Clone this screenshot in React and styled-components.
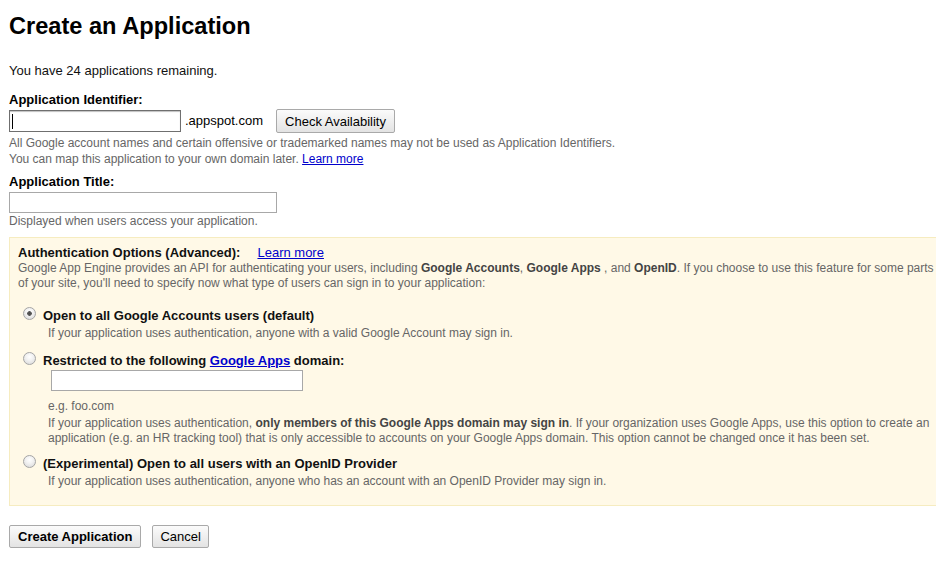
import styled, { createGlobalStyle } from "styled-components";

const Global = createGlobalStyle`
    html, body {
        margin: 0;
        padding: 0;
        background: #fff;
        overflow-x: hidden;
    }
    body {
        font-family: "Liberation Sans", Arial, sans-serif;
        font-size: 13px;
        color: #000;
    }
`;

const Page = styled.div`
    padding: 0 9px 40px;
`;

const Title = styled.h1`
    margin: 12px 0 0;
    font-size: 23.6px;
    line-height: 28px;
    font-weight: bold;
`;

const Remaining = styled.p`
    margin: 23px 0 0;
    line-height: 16px;
    color: #111;
`;

const Label = styled.div`
    margin-top: ${p => p.$top}px;
    font-weight: bold;
    line-height: 16px;
`;

const FieldRow = styled.div`
    display: flex;
    align-items: center;
    margin-top: 1px;
    height: 24px;
`;

const CaretWrap = styled.span`
    position: relative;
    display: inline-block;
`;

const Caret = styled.span`
    position: absolute;
    left: 3px;
    top: 4px;
    width: 1px;
    height: 15px;
    background: #000;
`;

const TextInput = styled.input`
    display: block;
    box-sizing: border-box;
    width: ${p => p.$w}px;
    height: ${p => p.$h || 21}px;
    margin: ${p => p.$margin || 0};
    padding: 1px 3px;
    border: 1px solid ${p => (p.$focus ? "#6f6f6f" : "#a8a8a8")};
    box-shadow: ${p => (p.$focus ? "inset 0 1px 1px rgba(0,0,0,.25)" : "none")};
    font: 13px "Liberation Sans", Arial, sans-serif;
    background: #fff;
    outline: none;
`;

const Suffix = styled.span`
    margin-left: 4px;
    line-height: 16px;
`;

const Button = styled.button`
    box-sizing: border-box;
    height: ${p => p.$h || 23}px;
    margin-left: ${p => p.$left || 0}px;
    padding: 0 ${p => p.$pad || 8}px;
    border: 1px solid #a9a9a9;
    border-radius: 2px;
    background: linear-gradient(#fbfbfb, #e3e3e3);
    font: ${p => (p.$bold ? "bold" : "normal")} 13px "Liberation Sans", Arial, sans-serif;
    color: #000;
    cursor: pointer;
`;

const Hint = styled.div`
    margin-top: ${p => p.$top || 0}px;
    font-size: 12px;
    line-height: 16px;
    color: #666;
`;

const Link = styled.a`
    color: #0000cc;
    text-decoration: underline;
    cursor: pointer;
`;

const AuthBox = styled.div`
    box-sizing: border-box;
    width: 942px;
    margin-top: 8px;
    padding: 7px 8px 16px;
    background: #fff9e7;
    border: 1px solid #f6ecc0;
`;

const AuthHeading = styled.div`
    font-weight: bold;
    line-height: 16px;
    color: #111;
`;

const HeadingLink = styled(Link)`
    font-weight: normal;
    margin-left: 17px;
`;

const AuthText = styled.p`
    margin: 0;
    font-size: 12px;
    line-height: 15px;
    color: #666;

    b {
        color: #444;
    }
`;

const Option = styled.div`
    margin-top: ${p => p.$top}px;
`;

const OptionLabel = styled.label`
    display: block;
    height: 16px;
    font-weight: bold;
    line-height: 16px;
    color: #111;
`;

const Radio = styled.input.attrs({ type: "radio", name: "auth" })`
    appearance: none;
    box-sizing: border-box;
    width: 13px;
    height: 13px;
    margin: 0 7px 0 5px;
    border: 1px solid #a5a5a5;
    border-radius: 50%;
    background: radial-gradient(circle at 50% 35%, #ffffff 0, #f2f2f2 40%, #d6d6d6 100%);
    vertical-align: baseline;

    &:checked {
        background:
            radial-gradient(circle, #4a4a4a 0, #5a5a5a 2px, transparent 2.6px),
            radial-gradient(circle at 50% 35%, #ffffff 0, #f2f2f2 40%, #d6d6d6 100%);
    }
`;

const OptionBody = styled.div`
    margin: ${p => p.$top || 3}px 0 0 30px;
    font-size: 12px;
    line-height: ${p => p.$lh || 15}px;
    color: #666;

    b {
        color: #444;
    }
`;

const Actions = styled.div`
    display: flex;
    align-items: center;
    margin-top: 19px;
`;

export default function App() {
    return (
        <Page>
            <Global />
            <Title>Create an Application</Title>
            <Remaining>You have 24 applications remaining.</Remaining>

            <Label $top={13}>Application Identifier:</Label>
            <FieldRow>
                <CaretWrap>
                    <TextInput $w={172} $h={22} $focus />
                    <Caret />
                </CaretWrap>
                <Suffix>.appspot.com</Suffix>
                <Button $h={24} $left={13} $pad={8}>Check Availability</Button>
            </FieldRow>
            <Hint $top={2}>
                All Google account names and certain offensive or trademarked names may not be used as Application Identifiers.
                <br />
                You can map this application to your own domain later. <Link>Learn more</Link>
            </Hint>

            <Label $top={7}>Application Title:</Label>
            <TextInput $w={268} $margin="2px 0 0" />
            <Hint>Displayed when users access your application.</Hint>

            <AuthBox>
                <AuthHeading>
                    Authentication Options (Advanced):
                    <HeadingLink>Learn more</HeadingLink>
                </AuthHeading>
                <AuthText>
                    Google App Engine provides an API for authenticating your users, including <b>Google Accounts</b>, <b>Google Apps</b> , and <b>OpenID</b>. If you choose to use this feature for some parts of your site, you'll need to specify now what type of users can sign in to your application:
                </AuthText>

                <Option $top={16}>
                    <OptionLabel>
                        <Radio defaultChecked />
                        Open to all Google Accounts users (default)
                    </OptionLabel>
                    <OptionBody>
                        If your application uses authentication, anyone with a valid Google Account may sign in.
                    </OptionBody>
                </Option>

                <Option $top={11}>
                    <OptionLabel>
                        <Radio />
                        Restricted to the following <Link>Google Apps</Link> domain:
                    </OptionLabel>
                    <TextInput $w={252} $margin="2px 0 0 33px" />
                    <OptionBody $top={7} $lh={16}>e.g. foo.com</OptionBody>
                    <OptionBody $top={2}>
                        If your application uses authentication, <b>only members of this Google Apps domain may sign in</b>. If your organization uses Google Apps, use this option to create an application (e.g. an HR tracking tool) that is only accessible to accounts on your Google Apps domain. This option cannot be changed once it has been set.
                    </OptionBody>
                </Option>

                <Option $top={9}>
                    <OptionLabel>
                        <Radio />
                        (Experimental) Open to all users with an OpenID Provider
                    </OptionLabel>
                    <OptionBody>
                        If your application uses authentication, anyone who has an account with an OpenID Provider may sign in.
                    </OptionBody>
                </Option>
            </AuthBox>

            <Actions>
                <Button $bold $pad={8}>Create Application</Button>
                <Button $left={11} $pad={7}>Cancel</Button>
            </Actions>
        </Page>
    );
}
